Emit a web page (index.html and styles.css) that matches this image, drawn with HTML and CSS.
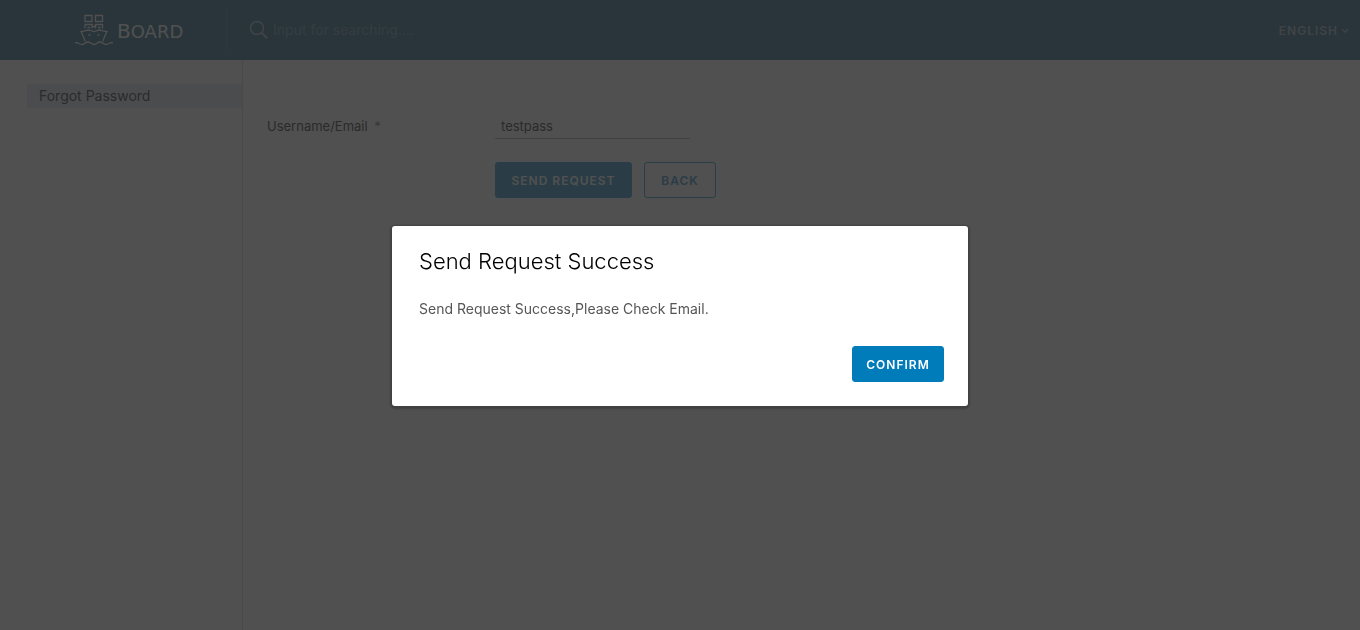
FILE: index.html
```
<!DOCTYPE html>
<html lang="en">
<head>
<meta charset="utf-8">
<title>Board</title>
<link rel="stylesheet" href="styles.css">
</head>
<body>
<div class="app">
  <header class="header">
    <a class="brand" href="#">
      <svg class="brand-logo" viewBox="0 0 38 34" fill="none" stroke="currentColor" stroke-width="1.3" aria-hidden="true">
        <path d="M10 2.500h7v6h-7zM20.500 2.500h7v6h-7z"/>
        <path d="M10 15.500v-4h7v4M20.500 15.500v-4h7v4M12.500 14.500h2.500M23 14.500h2.500M17 13.500h3.500"/>
        <path d="M10 28.500C9.500 25 7.500 22 6 18.500c4 0 5-1.500 7.500-1.500s3 1.500 5.500 1.500 3-1.500 5.500-1.500 3.500 1.500 7.500 1.500c-1.500 3.500-3.500 6.500-4 10"/>
        <path d="M13.500 22h2M22.500 22h2"/>
        <path d="M0 30c3-1.500 4 1.500 7 1.500S10 29 13 29s3 2.500 6 2.500 3-2.500 6-2.500 3 2.500 6 2.500 4-3 7-1.500"/>
      </svg>
      <span class="brand-name">B<span class="brand-small">oard</span></span>
    </a>
    <label class="search">
      <svg class="search-icon" viewBox="0 0 20 20" fill="none" stroke="currentColor" stroke-width="1.500" aria-hidden="true"><circle cx="8" cy="8" r="6.500"/><path d="M12.700 12.700l5.500 5.500" stroke-width="2"/></svg>
      <input class="search-input" type="search" aria-label="Search" placeholder="Input for searching....">
    </label>
    <button class="language" type="button">ENGLISH
      <svg class="caret" viewBox="0 0 8 8" fill="none" stroke="currentColor" stroke-width="1.300" aria-hidden="true"><path d="M1 2l3 3 3-3"/></svg>
    </button>
  </header>
  <div class="body">
    <nav class="sidebar"><a class="nav-link" href="#">Forgot Password</a></nav>
    <main class="content">
      <form class="form">
        <label class="label" for="user">Username/Email <span class="required">*</span></label>
        <input class="field" id="user" type="text" value="testpass">
        <div class="actions">
          <button class="button button-primary" type="button">SEND REQUEST</button>
          <button class="button button-outline" type="button">BACK</button>
        </div>
      </form>
    </main>
  </div>
</div>
<div class="backdrop">
  <section class="modal" role="dialog" aria-modal="true" aria-labelledby="modal-title">
    <h1 class="modal-title" id="modal-title">Send Request Success</h1>
    <p class="modal-text">Send Request Success,Please Check Email.</p>
    <div class="modal-footer"><button class="button button-primary" type="button">CONFIRM</button></div>
  </section>
</div>
</body>
</html>
```
FILE: styles.css
```
* { box-sizing: border-box; }
body { margin: 0; font: 14px/24px "Inter", sans-serif; color: #565656; background: #fafafa; }
button, input { font: inherit; }
a { color: inherit; text-decoration: none; }
.app { display: flex; flex-direction: column; min-height: 100vh; }
.header { display: flex; align-items: center; height: 60px; background: #004a70; color: #fafafa; }
.brand { display: flex; align-items: center; gap: 4px; width: 227px; height: 44px; padding-left: 75px; border-right: 1px solid #1a5b7e; }
.brand-logo { width: 38px; height: 34px; }
.brand-name { padding-top: 2px; font: 20px/28px "DejaVu Sans", sans-serif; text-transform: uppercase; }
.brand-small { font-size: 18px; }
.search { display: flex; align-items: center; gap: 4px; flex: 1; padding-left: 22px; color: #8fa9b8; }
.search-icon { width: 20px; height: 20px; }
.search-input { width: 200px; padding: 0; border: 0; outline: 0; background: transparent; color: inherit; }
.search-input::placeholder { color: #4c7c97; opacity: 1; }
.language { display: flex; align-items: center; gap: 3px; padding: 2px 11px 0; border: 0; background: none; color: #8fa9b8; font-size: 12px; font-weight: 600; letter-spacing: 1px; }
.caret { width: 8px; height: 8px; }
.body { display: flex; flex: 1; }
.sidebar { width: 243px; padding: 24px 0 24px 27px; border-right: 1px solid #ccc; }
.nav-link { display: block; padding-left: 12px; border-radius: 3px 0 0 3px; background: #d9e4ea; color: #000; }
.content { flex: 1; padding: 54px 24px; }
.form { display: grid; grid-template-columns: 204px 1fr; column-gap: 24px; row-gap: 23px; }
.label { font-size: 13px; color: #000; }
.required { margin-left: 3px; color: #565656; }
.field { width: 195px; height: 25px; padding: 0 6px; border: 0; border-bottom: 1px solid #999; border-radius: 0; outline: 0; background: transparent; color: #000; font-size: 13px; }
.actions { grid-column: 2; display: flex; gap: 12px; }
.button { height: 36px; padding: 2px 12px 0; border: 1px solid #007cbb; border-radius: 3px; font-size: 12px; font-weight: 600; letter-spacing: 1px; }
.button-primary { min-width: 92px; background: #007cbb; color: #fff; }
.actions .button-primary { min-width: 137px; }
.button-outline { min-width: 72px; background: transparent; color: #007cbb; }
.backdrop { position: fixed; inset: 0; display: flex; align-items: center; justify-content: center; background: rgba(49, 49, 49, .85); }
.modal { width: 576px; max-width: 90%; margin-top: 2px; padding: 23px 24px 24px; border-radius: 3px; background: #fff; box-shadow: 0 1px 2px 2px rgba(0, 0, 0, .2); }
.modal-title { margin: 0 0 24px; padding: 0 3px; font: 300 22px/24px "Inter", sans-serif; color: #000; }
.modal-text { margin: 0; padding: 0 3px; }
.modal-footer { display: flex; justify-content: flex-end; margin-top: 25px; }
```
